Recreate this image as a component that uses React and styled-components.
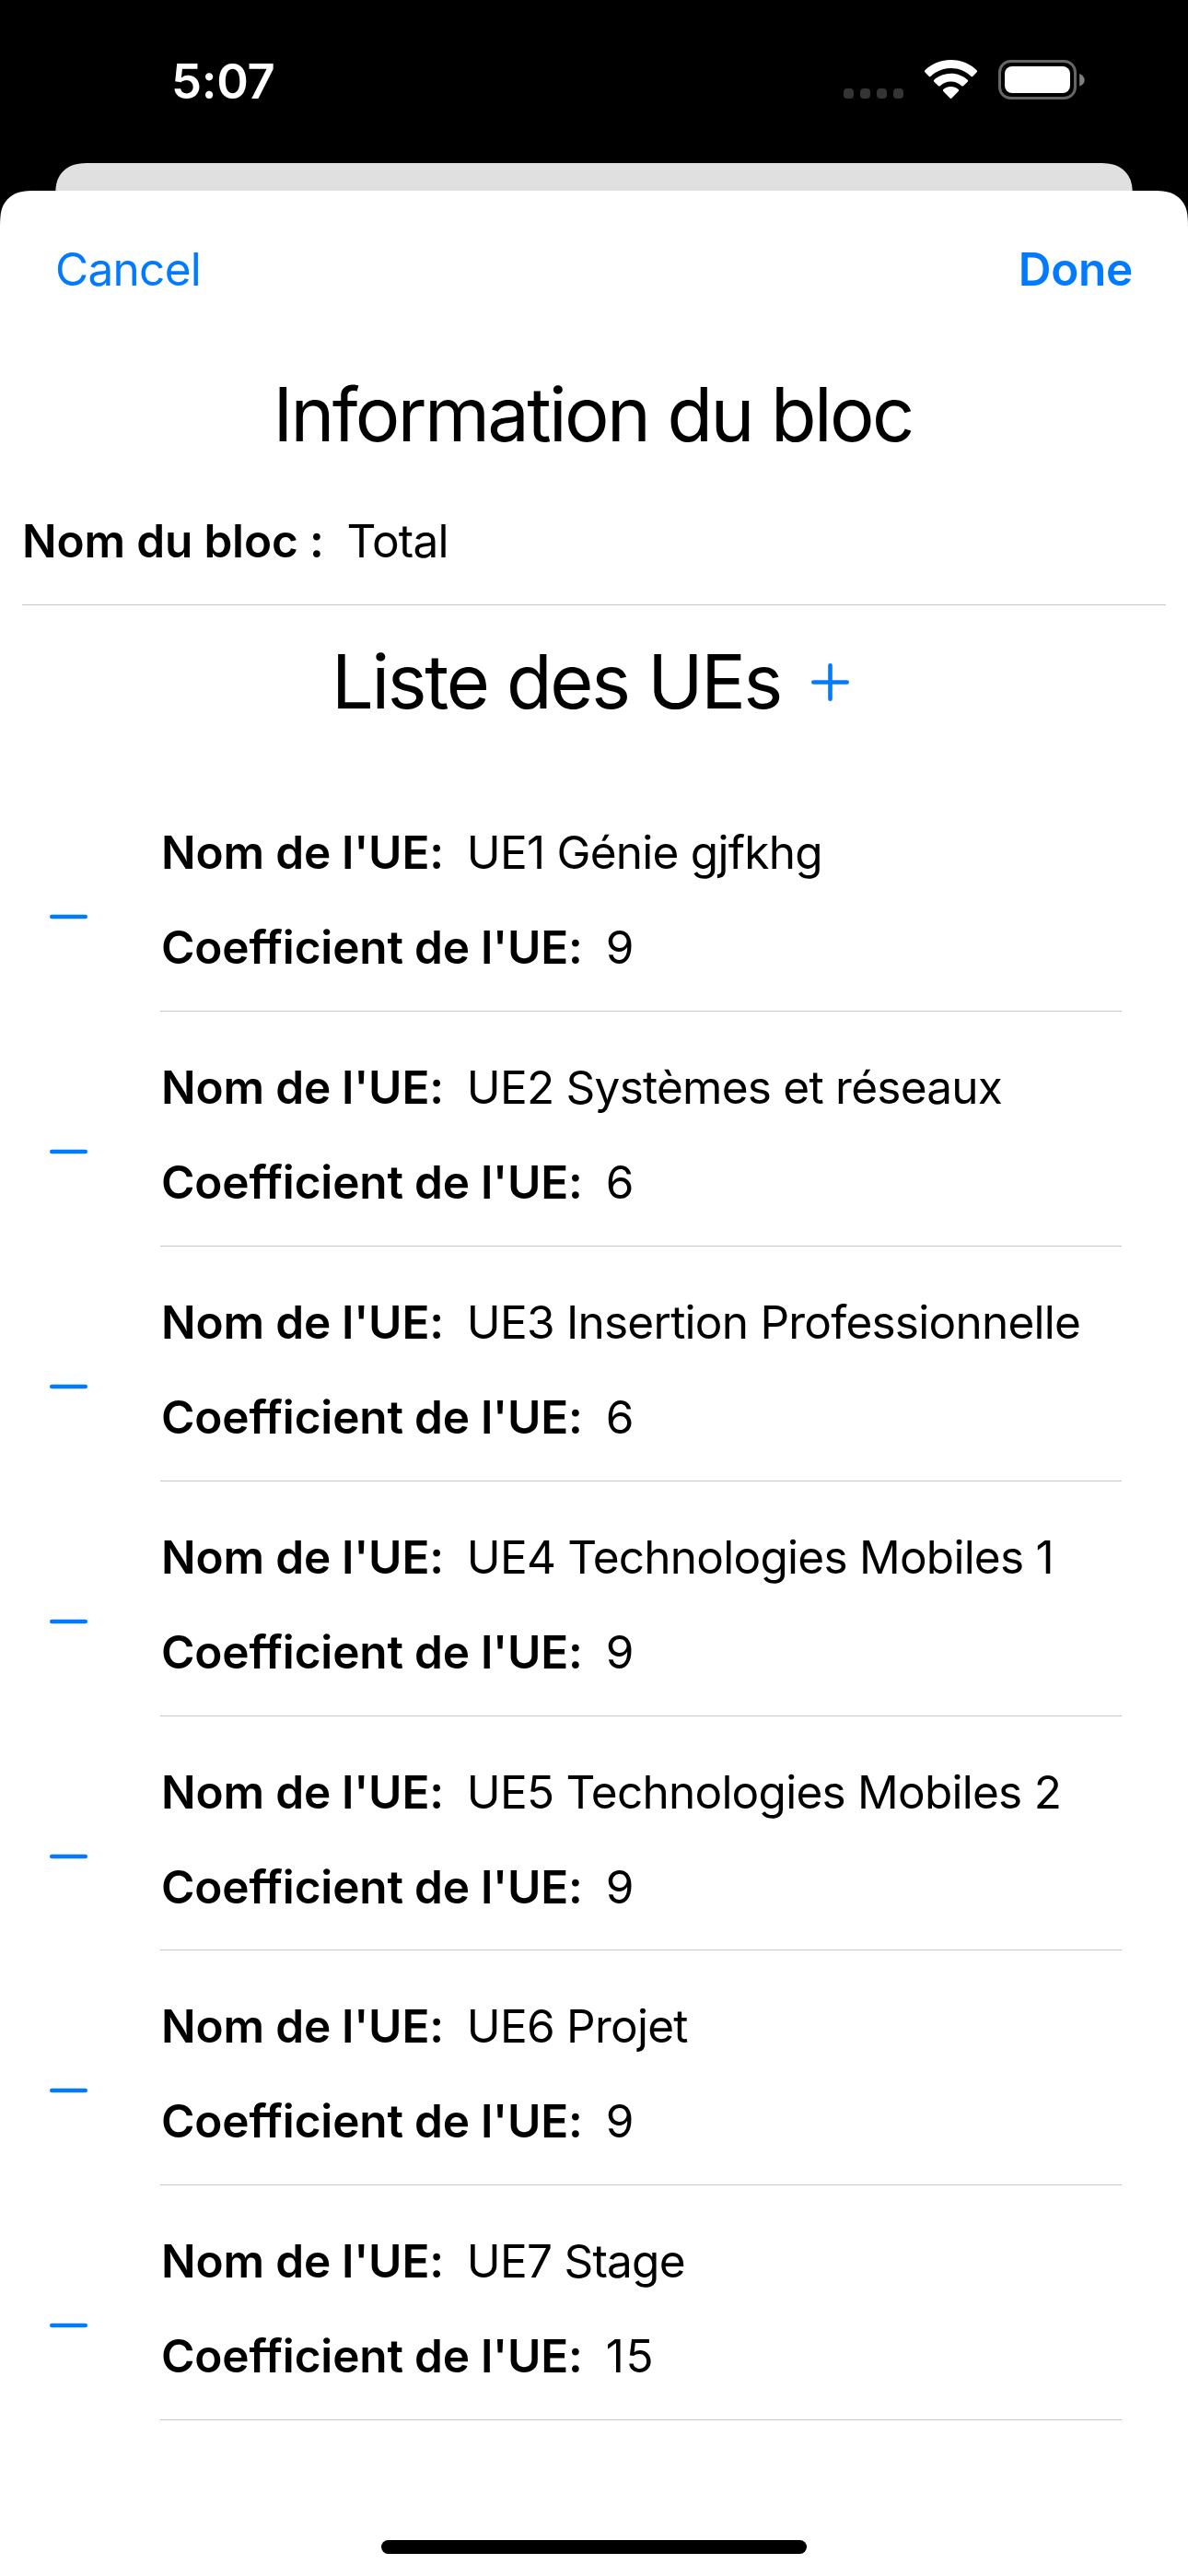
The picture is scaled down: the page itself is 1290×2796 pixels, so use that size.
import React from "react";
import styled, { createGlobalStyle } from "styled-components";

const GlobalStyle = createGlobalStyle`
  *, *::before, *::after { box-sizing: border-box; }
  body { margin: 0; background: #000; }
  button { appearance: none; border: 0; padding: 0; margin: 0; background: none; font: inherit; color: inherit; cursor: pointer; }
`;

const Screen = styled.div`
  width: 1290px;
  height: 2796px;
  display: flex;
  flex-direction: column;
  background: #000;
  color: #000;
  overflow: hidden;
  font-family: Inter, "Liberation Sans", sans-serif;
  font-size: 49.5px;
  line-height: 60px;
  font-variant-ligatures: none;
`;

const StatusBar = styled.header`
  height: 177px;
  flex: none;
  display: flex;
  justify-content: space-between;
  padding: 58px 108px 0 186px;
  color: #fff;
`;

const Clock = styled.span`
  font-size: 52.5px;
  font-weight: 600;
  letter-spacing: -0.3px;
`;

const StatusIcons = styled.div`
  display: flex;
  align-items: flex-start;
  padding-top: 6px;
`;

const BackSheet = styled.div`
  height: 30px;
  flex: none;
  margin: 0 60px;
  background: #e0e0e0;
  clip-path: path("M0 46C0 32.7 0 26 2.2 18.9C5 11.2 11.2 5 18.9 2.2C26 0 32.7 0 46 0H1124C1137.3 0 1144 0 1151.1 2.2C1158.8 5 1165 11.2 1167.8 18.9C1170 26 1170 32.7 1170 46Z");
`;

const Sheet = styled.main`
  flex: 1;
  display: flex;
  flex-direction: column;
  background: #fff;
  clip-path: path("M0 46C0 32.7 0 26 2.2 18.9C5 11.2 11.2 5 18.9 2.2C26 0 32.7 0 46 0H1244C1257.3 0 1264 0 1271.1 2.2C1278.8 5 1285 11.2 1287.8 18.9C1290 26 1290 32.7 1290 46V2589H0Z");
`;

const NavBar = styled.nav`
  display: flex;
  justify-content: space-between;
  padding: 55px 60px 0;
  color: #007aff;
`;

const NavButton = styled.button`
  font-weight: ${(p) => (p.$strong ? 600 : 400)};
  letter-spacing: ${(p) => (p.$strong ? "-0.3px" : "-0.7px")};
`;

const Title = styled.h1`
  margin: 78px 3px 0 0;
  text-align: center;
  font-size: 81px;
  line-height: 100px;
  font-weight: 400;
  letter-spacing: -2.6px;
`;

const BlockSection = styled.section`
  margin: 37px 24px 0;
  height: 120px;
  padding-top: 20px;
  border-bottom: 1px solid #c6c6c8;
`;

const Field = styled.div`
  display: flex;
  height: 60px;
  gap: 25px;
  white-space: nowrap;
`;

const Label = styled.span`
  font-weight: 600;
  letter-spacing: -0.15px;
`;

const Value = styled.span`
  letter-spacing: ${(p) => (p.$numeric ? "1.5px" : "-0.75px")};
`;

const ListHeader = styled.div`
  display: flex;
  align-items: center;
  justify-content: center;
  gap: 33px;
  margin: 33px 8px 0 0;
`;

const ListTitle = styled.h2`
  margin: 0;
  font-size: 81px;
  line-height: 100px;
  font-weight: 400;
  letter-spacing: -2.3px;
`;

const AddButton = styled.button`
  display: flex;
  color: #007aff;
`;

const RemoveButton = styled(AddButton)`
  margin-top: 49px;
`;

const List = styled.ul`
  list-style: none;
  margin: 53px 72px 0 54px;
  padding: 0;
`;

const Item = styled.li`
  height: 254.9px;
  display: flex;
  align-items: center;
  gap: 79px;
`;

const ItemBody = styled.div`
  flex: 1;
  height: 100%;
  display: flex;
  flex-direction: column;
  gap: 43px;
  padding: 52px 0 0 1px;
  border-bottom: 1px solid #c6c6c8;
`;

const HomeIndicator = styled.div`
  width: 462px;
  height: 15px;
  margin: auto auto 24px;
  border-radius: 8px;
  background: #000;
`;

const StatusGlyphs = () => (
  <svg width="268" height="46" viewBox="0 0 268 46" fill="none">
    <g fill="#343434">
      <rect x="2" y="32" width="11" height="11" rx="4" />
      <rect x="20" y="32" width="11" height="11" rx="4" />
      <rect x="38" y="32" width="11" height="11" rx="4" />
      <rect x="56" y="32" width="11" height="11" rx="4" />
    </g>
    <g fill="#fff">
      <path d="M118.500 1C130 1 139.500 5.400 146.600 12.300Q147.600 13.300 146.700 14.300L142.200 18.900Q141.300 19.700 140.300 18.800C134.500 13.300 127 10 118.500 10C110 10 102.500 13.300 96.700 18.800Q95.700 19.700 94.800 18.900L90.300 14.300Q89.400 13.300 90.400 12.300C97.500 5.400 107 1 118.500 1Z" />
      <path d="M118.500 15.700C125.700 15.700 132 18.400 136.700 22.700Q137.700 23.700 136.700 24.700L132.100 29.200Q131.200 30 130.200 29.200C127 26.300 123 24.600 118.500 24.600C114 24.600 110 26.300 106.800 29.200Q105.800 30 104.900 29.200L100.300 24.700Q99.300 23.700 100.300 22.700C105 18.400 111.300 15.700 118.500 15.700Z" />
      <path d="M118.500 30C121.700 30 124.500 31.100 126.700 33Q127.700 34 126.800 34.900L119.500 42.500Q118.500 43.400 117.500 42.500L110.200 34.900Q109.300 34 110.300 33C112.500 31.100 115.300 30 118.500 30Z" />
    </g>
    <rect x="171.500" y="2.500" width="82" height="40" rx="12" stroke="#666" strokeWidth="3" />
    <rect x="177" y="8" width="71" height="29" rx="8" fill="#fff" />
    <path d="M258.200 16C261.500 17.500 263.700 19.900 263.700 23S261.500 28.500 258.200 29.500Z" fill="#808080" />
  </svg>
);

const PlusIcon = () => (
  <svg width="41" height="41" viewBox="0 0 41 41" stroke="currentColor" strokeWidth="4.600" strokeLinecap="round">
    <path d="M2.300 20.500H38.700M20.500 2.300V38.700" />
  </svg>
);

const MinusIcon = () => (
  <svg width="41" height="6" viewBox="0 0 41 6" stroke="currentColor" strokeWidth="4.600" strokeLinecap="round">
    <path d="M2.300 3H38.700" />
  </svg>
);

const units = [
  { name: "UE1 Génie gjfkhg", coefficient: 9 },
  { name: "UE2 Systèmes et réseaux", coefficient: 6 },
  { name: "UE3 Insertion Professionnelle", coefficient: 6 },
  { name: "UE4 Technologies Mobiles 1", coefficient: 9 },
  { name: "UE5 Technologies Mobiles 2", coefficient: 9 },
  { name: "UE6 Projet", coefficient: 9 },
  { name: "UE7 Stage", coefficient: 15 },
];

export default function App() {
  return (
    <Screen>
      <GlobalStyle />
      <StatusBar>
        <Clock>5:07</Clock>
        <StatusIcons>
          <StatusGlyphs />
        </StatusIcons>
      </StatusBar>
      <BackSheet />
      <Sheet>
        <NavBar>
          <NavButton>Cancel</NavButton>
          <NavButton $strong>Done</NavButton>
        </NavBar>
        <Title>Information du bloc</Title>
        <BlockSection>
          <Field>
            <Label>Nom du bloc :</Label>
            <Value>Total</Value>
          </Field>
        </BlockSection>
        <ListHeader>
          <ListTitle>Liste des UEs</ListTitle>
          <AddButton aria-label="Ajouter">
            <PlusIcon />
          </AddButton>
        </ListHeader>
        <List>
          {units.map((unit) => (
            <Item key={unit.name}>
              <RemoveButton aria-label="Supprimer">
                <MinusIcon />
              </RemoveButton>
              <ItemBody>
                <Field>
                  <Label>Nom de l'UE:</Label>
                  <Value>{unit.name}</Value>
                </Field>
                <Field>
                  <Label>Coefficient de l'UE:</Label>
                  <Value $numeric>{unit.coefficient}</Value>
                </Field>
              </ItemBody>
            </Item>
          ))}
        </List>
        <HomeIndicator />
      </Sheet>
    </Screen>
  );
}
